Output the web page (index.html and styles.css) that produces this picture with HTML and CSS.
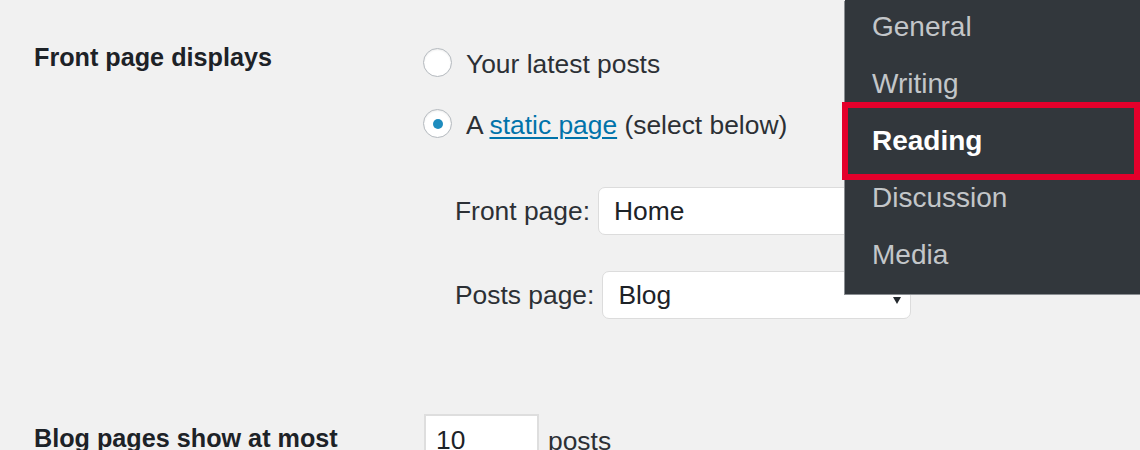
FILE: index.html
```html
<!DOCTYPE html>
<html lang="en">
<head>
<meta charset="utf-8">
<title>Reading Settings</title>
<link rel="stylesheet" href="styles.css">
</head>
<body>
<div class="page">
  <div class="form-row row-front">
    <div class="label">Front page displays</div>
    <div class="field">
      <label class="radio-line first">
        <span class="radio"></span>
        <span>Your latest posts</span>
      </label>
      <label class="radio-line">
        <span class="radio checked"></span>
        <span>A <a href="#" class="link">static page</a> (select below)</span>
      </label>
      <div class="select-line first-select">
        <span>Front page:</span>
        <div class="select"><span>Home</span><span class="arrow"></span></div>
      </div>
      <div class="select-line">
        <span>Posts page:</span>
        <div class="select"><span>Blog</span><span class="arrow"></span></div>
      </div>
    </div>
  </div>
  <div class="form-row row-blog">
    <div class="label label-blog">Blog pages show at most</div>
    <div class="field field-inline">
      <div class="number">10</div>
      <span>posts</span>
    </div>
  </div>

  <nav class="menu">
    <ul class="menu-list">
      <li>General</li>
      <li>Writing</li>
      <li class="active">Reading</li>
      <li>Discussion</li>
      <li>Media</li>
    </ul>
    <div class="highlight"></div>
  </nav>
</div>
</body>
</html>
```

FILE: styles.css
```css
* { box-sizing: border-box; }

html, body {
  margin: 0;
  padding: 0;
  width: 1140px;
  height: 450px;
  overflow: hidden;
  background: #f1f1f1;
}

body {
  font-family: "Liberation Sans", Arial, sans-serif;
  color: #2c3035;
}

.page {
  position: relative;
  width: 1140px;
  height: 450px;
  padding-left: 34px;
}

.form-row {
  display: flex;
}

.label {
  width: 389px;
  flex: none;
  font-size: 25.2px;
  line-height: 30px;
  font-weight: bold;
  color: #1d2227;
  padding-top: 42px;
}

.field {
  font-size: 26.4px;
  line-height: 30px;
}

.radio-line {
  display: flex;
  align-items: center;
  height: 30px;
  margin-top: 31px;
  gap: 14px;
}

.radio-line.first {
  margin-top: 49px;
}

.radio {
  width: 29px;
  height: 29px;
  border-radius: 50%;
  border: 1.5px solid #b4b9be;
  background: #fff;
  box-shadow: inset 0 1px 2px rgba(0, 0, 0, 0.08);
  display: flex;
  align-items: center;
  justify-content: center;
  margin-top: -3px;
}

.radio.checked::after {
  content: "";
  width: 10px;
  height: 10px;
  border-radius: 50%;
  background: #1e8cbe;
}

.link {
  color: #0073aa;
  text-decoration: underline;
  text-decoration-thickness: 1.5px;
  text-underline-offset: 3px;
}

.select-line {
  display: flex;
  align-items: center;
  gap: 8px;
  margin-left: 32px;
  margin-top: 36px;
}

.select-line.first-select {
  margin-top: 47px;
}

.select {
  width: 309px;
  height: 48px;
  background: #fff;
  border: 1.5px solid #dcdcdc;
  border-radius: 7px;
  display: flex;
  align-items: center;
  justify-content: space-between;
  padding: 0 9px 0 15px;
  color: #1d2227;
}

.arrow {
  width: 0;
  height: 0;
  border-left: 4px solid transparent;
  border-right: 4px solid transparent;
  border-top: 7px solid #23282d;
  margin-top: 10px;
}

.row-blog {
  margin-top: 95px;
}

.label-blog {
  padding-top: 9px;
}

.field-inline {
  display: flex;
  align-items: center;
  gap: 9px;
  height: 48px;
  margin-left: 1px;
}

.number {
  width: 115px;
  height: 48px;
  background: #fff;
  border: 2px solid #dedede;
  padding-left: 10px;
  display: flex;
  align-items: center;
  padding-top: 4px;
  color: #1d2227;
}

.field-inline > span {
  padding-top: 6px;
}

.menu {
  position: absolute;
  top: 0;
  left: 845px;
  width: 300px;
  height: 294px;
  background: #32373c;
  box-shadow: -1px 1px 0 #8a8e92;
}

.menu-list {
  list-style: none;
  margin: -2px 0 0 0;
  padding: 0;
}

.menu-list li {
  font-size: 28px;
  line-height: 57px;
  padding-left: 27px;
  color: #c3c6c9;
}

.menu-list li.active {
  color: #fff;
  font-weight: bold;
}

.highlight {
  position: absolute;
  top: 102px;
  left: -3px;
  width: 298px;
  height: 78px;
  border: 6px solid #e4002b;
}
```
